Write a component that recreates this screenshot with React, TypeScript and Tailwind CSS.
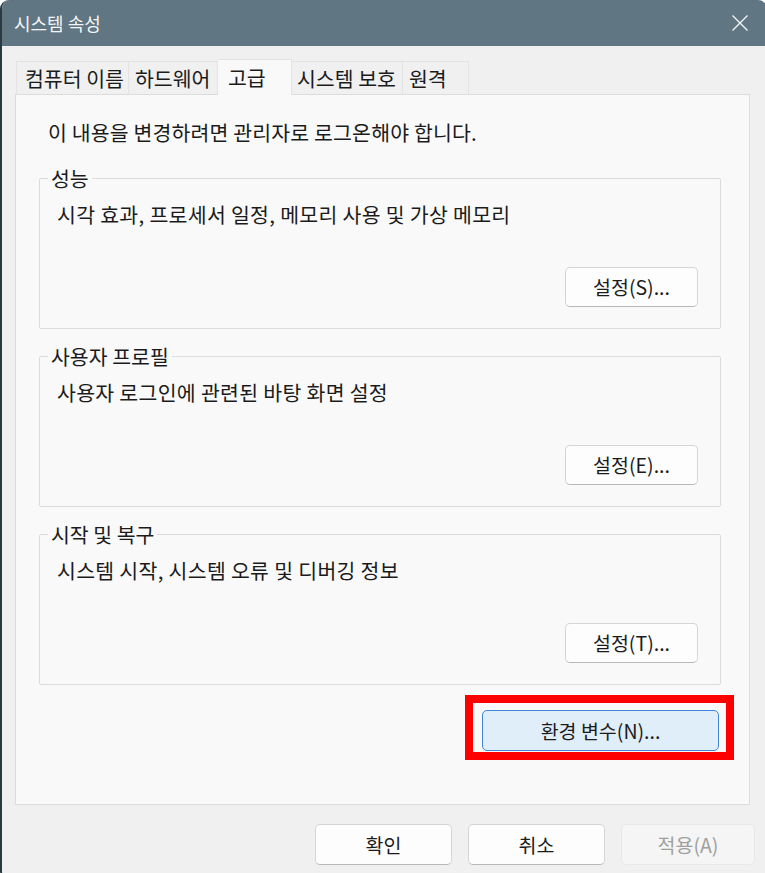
import React from "react";

const font = { fontFamily: '"Noto Sans CJK KR", "Noto Sans", sans-serif' };

function Btn({ children, disabled = false }: { children: React.ReactNode; disabled?: boolean }) {
  return (
    <button
      className={
        disabled
          ? "w-[134px] h-[41px] rounded-[5px] border border-[#e8e8e8] bg-[#f5f5f5] text-[#a0a0a0] text-[19.5px] leading-none"
          : "w-[137px] h-[41px] rounded-[5px] border border-[#d5d5d5] border-b-[#b8b8b8] bg-[#fdfdfd] text-[#1b1b1b] text-[19.5px] leading-none"
      }
    >
      {children}
    </button>
  );
}

function Group({ title, desc, btn }: { title: string; desc: string; btn: string }) {
  return (
    <fieldset className="ml-[23px] mr-[28px] border border-[#dcdcdc] rounded-[2px] px-0 pt-0 pb-[21px]">
      <legend className="ml-[8px] px-[3px] text-[20.5px] leading-none text-[#1b1b1b]">{title}</legend>
      <div className="pl-[17px] pt-[15px] text-[20.5px] leading-none tracking-[0.3px] text-[#1b1b1b]">{desc}</div>
      <div className="mt-[43px] flex justify-end pr-[22px]">
        <button className="w-[133px] h-[40px] rounded-[5px] border border-[#d5d5d5] border-b-[#b8b8b8] bg-[#fdfdfd] text-[#1b1b1b] text-[19.5px] leading-none">
          {btn}
        </button>
      </div>
    </fieldset>
  );
}

const tabBase =
  "h-[33px] flex items-center border border-[#e3e3e3] border-b-0 bg-[#f0f0f0] text-[20.5px] leading-none text-[#1b1b1b]";

export default function App() {
  return (
    <div className="w-[765px] h-[873px] bg-white overflow-hidden" style={font}>
      <div className="w-[767px] h-[880px] rounded-t-[9px] rounded-bl-[9px] overflow-hidden border-l-2 border-[#2a3942] bg-[#f0f0f0] flex flex-col">
        <div className="h-[46px] bg-[#607682] flex items-center justify-between pl-[12px] pr-[16px] shrink-0">
          <span className="text-[18px] leading-none text-[#f3f5f6]">시스템 속성</span>
          <svg width="18" height="18" viewBox="0 0 18 18" className="mr-[2px]">
            <path d="M1.5 1.5 L16.5 16.5 M16.5 1.5 L1.5 16.5" stroke="#f3f5f6" strokeWidth="1.4" />
          </svg>
        </div>

        <div className="pl-[14px] pt-[13px] flex items-end h-[48px] relative z-10">
          <div className={tabBase + " w-[113px] pl-[8px]"}>컴퓨터 이름</div>
          <div className={tabBase + " w-[89px] pl-[6px] border-l-0"}>하드웨어</div>
          <div className="h-[36px] w-[74px] pl-[10px] flex items-center border border-[#e3e3e3] border-b-0 border-l-0 bg-[#f9f9f9] text-[20.5px] leading-none text-[#1b1b1b] -mb-[1px]">고급</div>
          <div className={tabBase + " w-[111px] pl-[5px] border-l-0"}>시스템 보호</div>
          <div className={tabBase + " w-[66px] pl-[6px] border-l-0"}>원격</div>
        </div>

        <div className="ml-[13px] w-[735px] h-[711px] border border-[#dcdcdc] bg-[#f9f9f9] flex flex-col">
          <div className="pl-[32px] pt-[27px] text-[20.5px] leading-none tracking-[0.15px] text-[#1b1b1b] h-[73px]">이 내용을 변경하려면 관리자로 로그온해야 합니다.</div>
          <div className="flex flex-col gap-[17px]">
            <Group title="성능" desc="시각 효과, 프로세서 일정, 메모리 사용 및 가상 메모리" btn="설정(S)..." />
            <Group title="사용자 프로필" desc="사용자 로그인에 관련된 바탕 화면 설정" btn="설정(E)..." />
            <Group title="시작 및 복구" desc="시스템 시작, 시스템 오류 및 디버깅 정보" btn="설정(T)..." />
          </div>
          <div className="flex justify-end pr-[30px] pt-[25px]">
            <div className="relative">
              <button className="w-[237px] h-[41px] rounded-[5px] border border-[#3d86d4] bg-[#e0eef9] text-[#1b1b1b] text-[19.5px] leading-none">
                환경 변수(N)...
              </button>
              <div className="absolute -left-[17px] -top-[15px] w-[269px] h-[65px] border-[8px] border-[#ff0000]"></div>
            </div>
          </div>
        </div>

        <div className="flex justify-end gap-[16px] pr-[12px] pt-[19px]">
          <Btn>확인</Btn>
          <Btn>취소</Btn>
          <Btn disabled>적용(A)</Btn>
        </div>
      </div>
    </div>
  );
}
